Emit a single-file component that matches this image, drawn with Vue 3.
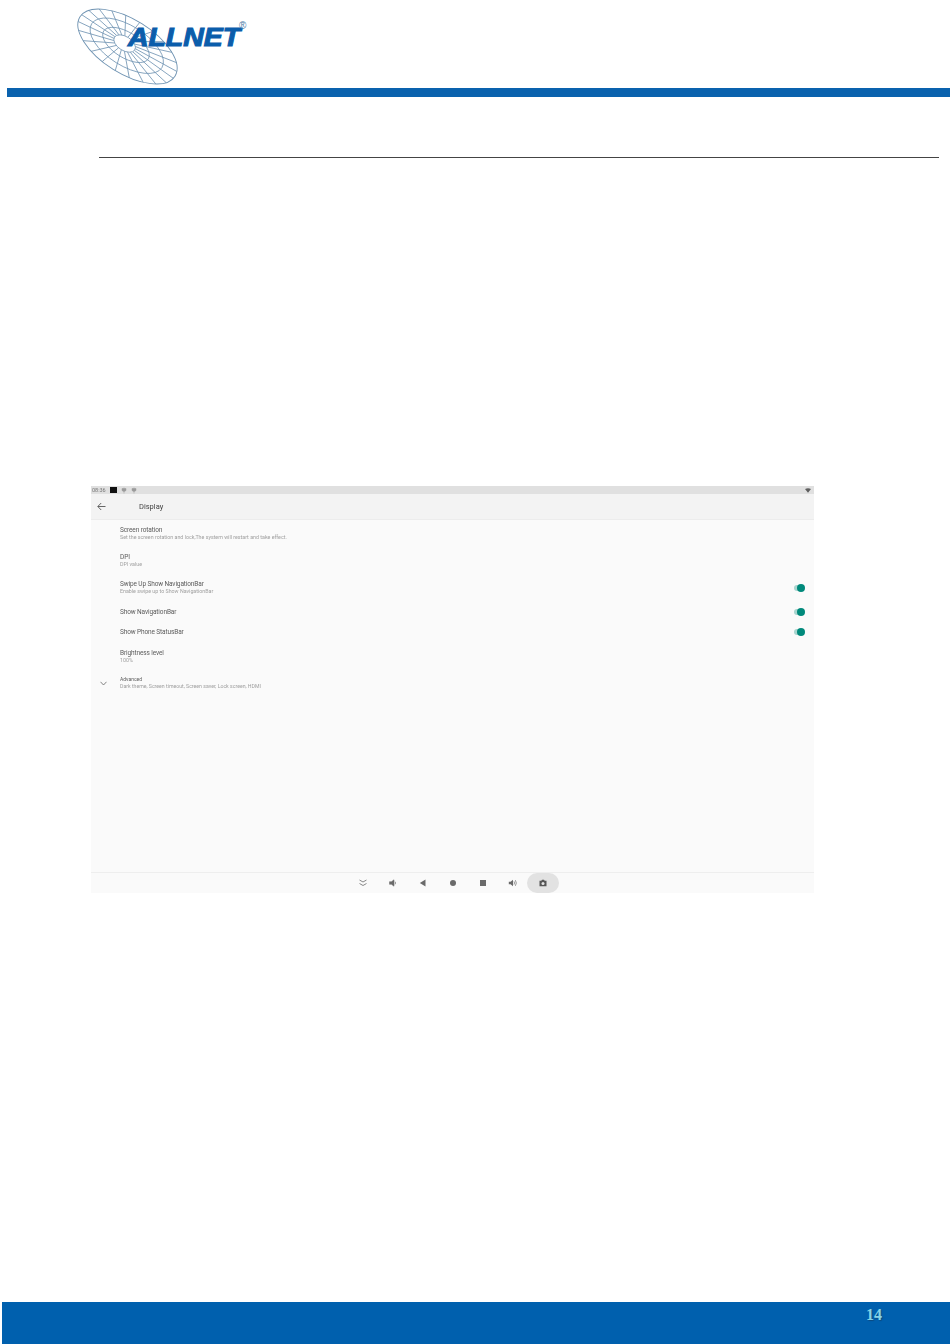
<template>
  <div class="page">
    <header class="doc-header">
      <svg class="logo" width="260" height="88" viewBox="0 0 260 88">
        <g transform="translate(127.5 46.5) rotate(32)" fill="none" stroke="#6f93b2" stroke-width="0.75">
          <ellipse cx="0" cy="0" rx="56" ry="27" fill="#fff" stroke-width="0.9" />
          <ellipse v-for="ring in rings" :key="ring.rx" :cx="ring.cx" :cy="ring.cy" :rx="ring.rx" :ry="ring.ry" />
          <line v-for="(s, i) in spokes" :key="i" :x1="s.x1" :y1="s.y1" :x2="s.x2" :y2="s.y2" />
          <ellipse cx="-4" cy="-1" rx="12" ry="7" fill="#fff" />
        </g>
        <text class="logo-text" x="128" y="45.5" textLength="112" lengthAdjust="spacingAndGlyphs">ALLNET</text>
        <text class="logo-reg" x="239" y="29">®</text>
      </svg>
    </header>
    <div class="blue-bar"></div>
    <div class="rule"></div>

    <section class="shot">
      <div class="status">
        <span class="time">08:36</span>
        <span class="status-square"></span>
        <svg v-for="n in 2" :key="n" class="status-icon" width="6" height="7" viewBox="0 0 6 7">
          <path d="M3 0.5 L3 6.5 M1 1.5 L5 1.5 L5 3.5 Q3 5.5 1 3.5 Z" fill="#9a9a9a" stroke="#9a9a9a" stroke-width="0.5" />
        </svg>
        <svg class="wifi" width="6" height="5" viewBox="0 0 8 6">
          <path d="M0 1 Q4 -1 8 1 L4 6 Z" fill="#5e5e5e" />
        </svg>
      </div>

      <div class="appbar">
        <svg class="back" width="9" height="9" viewBox="0 0 9 9">
          <path d="M8.5 4.5 H1 M4.2 1 L0.8 4.5 L4.2 8" fill="none" stroke="#555" stroke-width="0.9" />
        </svg>
        <span class="appbar-title">Display</span>
      </div>

      <div class="list">
        <div v-for="row in rows" :key="row.title" class="row" :class="{ advanced: row.advanced }" :style="{ height: row.height + 'px' }">
          <svg v-if="row.advanced" class="chevron" width="7" height="5" viewBox="0 0 7 5">
            <path d="M0.5 0.8 L3.5 4 L6.5 0.8" fill="none" stroke="#666" stroke-width="0.8" />
          </svg>
          <div class="row-text">
            <div class="row-title">{{ row.title }}</div>
            <div v-if="row.sub" class="row-sub">{{ row.sub }}</div>
          </div>
          <span v-if="row.toggle" class="switch"><span class="thumb"></span></span>
        </div>
      </div>

      <nav class="navbar">
        <span v-for="b in navButtons" :key="b.name" class="nav-btn" :class="{ active: b.active }">
          <svg width="10" height="10" viewBox="0 0 10 10" v-html="b.svg"></svg>
        </span>
      </nav>
    </section>

    <footer class="doc-footer">
      <span class="page-no">14</span>
    </footer>
  </div>
</template>

<script setup>
// концентрические кольца логотипа и спицы между ними
const rings = [0.74, 0.47].map((k) => ({
  cx: -4 * (1 - k),
  cy: -1 * (1 - k),
  rx: 56 * k,
  ry: 27 * k,
}));

const spokes = Array.from({ length: 22 }, (_, i) => {
  const a = (i / 22) * Math.PI * 2 + 0.1;
  return {
    x1: -4 + 12 * Math.cos(a),
    y1: -1 + 7 * Math.sin(a),
    x2: 56 * Math.cos(a),
    y2: 27 * Math.sin(a),
  };
});

const rows = [
  { title: 'Screen rotation', sub: 'Set the screen rotation and lock,The system will restart and take effect.', height: 26 },
  { title: 'DPI', sub: 'DPI value', height: 28 },
  { title: 'Swipe Up Show NavigationBar', sub: 'Enable swipe up to Show NavigationBar', height: 27, toggle: true },
  { title: 'Show NavigationBar', height: 21, toggle: true },
  { title: 'Show Phone StatusBar', height: 20, toggle: true },
  { title: 'Brightness level', sub: '100%', height: 28 },
  { title: 'Advanced', sub: 'Dark theme, Screen timeout, Screen saver, Lock screen, HDMI', height: 25, advanced: true },
];

const grey = '#6a6a6a';
const navButtons = [
  { name: 'hide', svg: `<path d="M1.5 2 L5 4 L8.5 2 M1.5 5.5 L5 7.5 L8.5 5.5" fill="none" stroke="${grey}" stroke-width="0.8"/>` },
  { name: 'vol-down', svg: `<path d="M1.5 3.7 H3.4 L6 1.8 V8.2 L3.4 6.3 H1.5 Z M7 3.6 Q8 5 7 6.4" fill="${grey}" stroke="${grey}" stroke-width="0.5"/>` },
  { name: 'back', svg: `<path d="M7.5 1.5 V8.5 L1.8 5 Z" fill="${grey}"/>` },
  { name: 'home', svg: `<circle cx="5" cy="5" r="3" fill="${grey}"/>` },
  { name: 'recent', svg: `<rect x="2" y="2" width="6" height="6" fill="${grey}"/>` },
  { name: 'vol-up', svg: `<path d="M0.8 3.7 H2.6 L5 1.8 V8.2 L2.6 6.3 H0.8 Z" fill="${grey}"/><path d="M6 3.4 Q7 5 6 6.6 M7.4 2.2 Q9.2 5 7.4 7.8" fill="none" stroke="${grey}" stroke-width="0.7"/>` },
  { name: 'camera', active: true, svg: `<path d="M1.5 2.8 H3.3 L4 1.8 H6 L6.7 2.8 H8.5 V8.2 H1.5 Z" fill="#555"/><circle cx="5" cy="5.4" r="1.5" fill="#e2e2e2"/>` },
];
</script>

<style scoped>
.page {
  position: relative;
  width: 950px;
  height: 1344px;
  background: #fff;
  display: flex;
  flex-direction: column;
  font-family: Roboto, "Liberation Sans", sans-serif;
  overflow: hidden;
}

.doc-header {
  height: 88px;
}

.logo {
  display: block;
}

.logo-text {
  font-family: "Liberation Sans", Arial, sans-serif;
  font-size: 26px;
  font-weight: bold;
  font-style: italic;
  fill: #0b5dab;
  stroke: #0b5dab;
  stroke-width: 1.1px;
}

.logo-reg {
  font-family: "Liberation Sans", Arial, sans-serif;
  font-size: 10px;
  fill: #4d7ea8;
}

.blue-bar {
  height: 9px;
  margin-left: 7px;
  background: #0a62ae;
}

.rule {
  height: 1px;
  margin: 60px 11px 0 99px;
  background: #444;
}

.shot {
  width: 723px;
  height: 407px;
  margin: 328px 0 0 91px;
  background: #fafafa;
  display: flex;
  flex-direction: column;
  filter: blur(0.35px);
}

.status {
  height: 8px;
  flex: none;
  display: flex;
  align-items: center;
  padding: 0 3px 0 1px;
  background: #e0e0e0;
  gap: 3px;
}

.time {
  font-size: 5.5px;
  color: #777;
  width: 15px;
}

.status-square {
  width: 7px;
  height: 6px;
  margin-right: 1px;
  background: #111;
}

.status-icon + .status-icon {
  margin-left: 1px;
}

.wifi {
  margin-left: auto;
}

.appbar {
  height: 25px;
  flex: none;
  display: flex;
  align-items: center;
  padding-left: 6px;
  background: #f3f3f3;
  border-bottom: 1px solid #ececec;
  box-sizing: content-box;
}

.back {
  margin-right: 33px;
}

.appbar-title {
  font-size: 7.5px;
  color: #444;
}

.list {
  flex: 1;
}

.row {
  position: relative;
  display: flex;
  align-items: center;
  padding-left: 29px;
}

.row-title {
  font-size: 6.5px;
  letter-spacing: -0.12px;
  line-height: 8px;
  color: #5c5c5c;
}

.row-sub {
  font-size: 5.3px;
  line-height: 7px;
  color: #a0a0a0;
}

.advanced .row-title {
  font-size: 5px;
  letter-spacing: 0;
}

.advanced .row-sub {
  font-size: 5.2px;
}

.chevron {
  position: absolute;
  left: 9px;
  top: 11px;
}

.switch {
  position: absolute;
  right: 10px;
  top: 50%;
  width: 10px;
  height: 6px;
  margin-top: -3px;
  border-radius: 3px;
  background: #a8d5cf;
}

.thumb {
  position: absolute;
  right: -1px;
  top: -1px;
  width: 8px;
  height: 8px;
  border-radius: 50%;
  background: #00897b;
}

.navbar {
  height: 20px;
  flex: none;
  display: flex;
  justify-content: center;
  align-items: center;
  border-top: 1px solid #eeeeee;
}

.nav-btn {
  width: 30px;
  height: 20px;
  display: flex;
  align-items: center;
  justify-content: center;
}

.nav-btn.active {
  width: 32px;
  margin: 0 -1px;
  background: #e2e2e2;
  border-radius: 10px;
}

.doc-footer {
  position: absolute;
  left: 2px;
  right: 0;
  bottom: 0;
  height: 42px;
  background: #0060ae;
  display: flex;
  justify-content: flex-end;
}

.page-no {
  margin: 4px 68px 0 0;
  font-family: "Liberation Serif", "Times New Roman", serif;
  font-size: 16px;
  font-weight: bold;
  line-height: 18px;
  color: #86d3e6;
  text-shadow: 1px 1px 1px #0b4a80;
}
</style>
